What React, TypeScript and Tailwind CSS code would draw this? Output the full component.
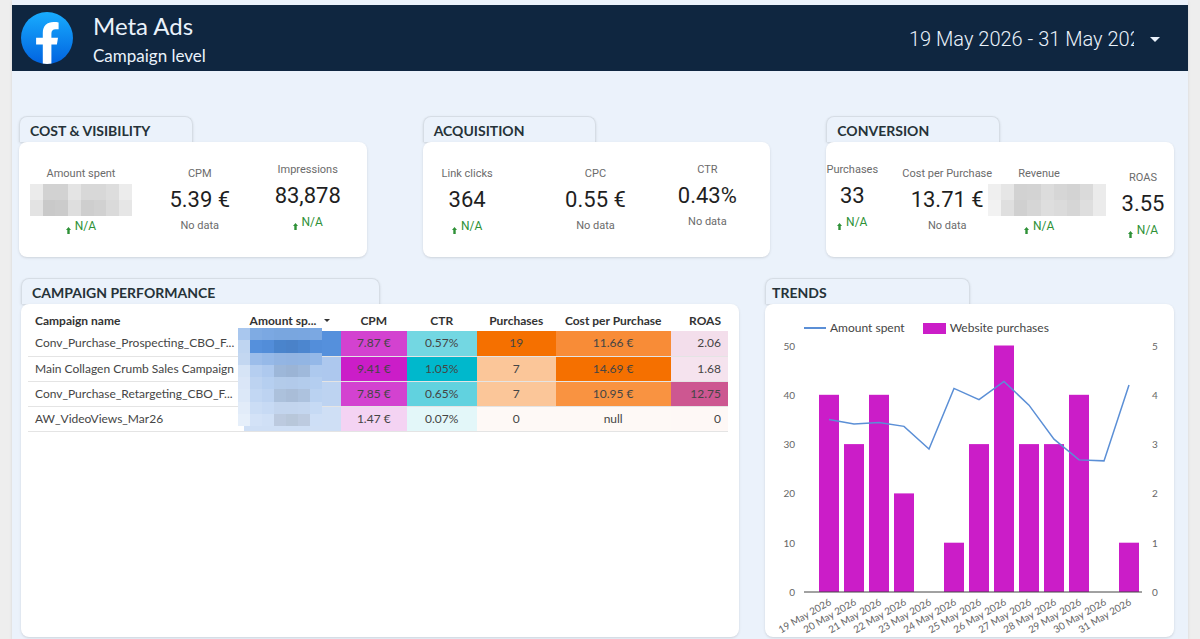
import React from "react";

interface Metric {
  label: string;
  value?: string;
  change?: string;
  mosaic?: string[];
  mosaicWidth?: string;
  className: string;
}

interface Campaign {
  name: string;
  amountBg: string;
  cells: { text: string; bg: string }[];
}

const SPENT_MOSAIC = [
  "#ebebeb", "#d2d2d2", "#d2d2d2", "#e4e4e4", "#d8d8d8", "#d8d8d8", "#dddddd", "#ececec",
  "#e3e3e3", "#c9c9c9", "#cbcbcb", "#dedede", "#cecece", "#d1d1d1", "#dadada", "#e6e6e6",
];

const REVENUE_MOSAIC = [
  "#efefef", "#e6e6e6", "#d2d2d2", "#d3d3d3", "#dcdcdc", "#d6d6d6", "#d3d3d3", "#dadada", "#ebebeb",
  "#f2f2f2", "#dfdfdf", "#d0d0d0", "#d6d6d6", "#dedede", "#dbdbdb", "#d6d6d6", "#dedede", "#ebebeb",
];

const COLUMN_MOSAIC = [
  "#a9c7ee", "#7fabe3", "#7ba8e2", "#79a6df", "#79a6df", "#79a6e0", "#7ba8e2",
  "#bfd5f1", "#5590dc", "#528dd9", "#4a84cc", "#4a82c9", "#4c86cf", "#538eda",
  "#c3d7f1", "#9cbdea", "#96b9e8", "#93b5e3", "#92b4e2", "#92b5e3", "#94b8e8",
  "#d6e4f6", "#b5cef0", "#aec9ee", "#9db7d9", "#9bb4d5", "#9fb9db", "#adc9ee",
  "#dae6f7", "#bdd3f1", "#b6cff0", "#b3cbea", "#b2caea", "#b3ccec", "#b4cef0",
  "#dce8f8", "#c2d7f3", "#bdd3f1", "#acc1dc", "#a9bdd8", "#adc2de", "#bad2f1",
  "#e2ecf9", "#cbddf5", "#c7daf4", "#c3d5ee", "#c3d5ee", "#c4d6ef", "#c6daf4",
  "#e6effa", "#d3e2f7", "#d0e0f6", "#bccadf", "#b8c7da", "#bdcbe0", "#cedff6",
];

const costMetrics: Metric[] = [
  { label: "Amount spent", mosaic: SPENT_MOSAIC, mosaicWidth: "w-[102px] grid-cols-8", change: "N/A", className: "pt-6" },
  { label: "CPM", value: "5.39 €", className: "pt-6" },
  { label: "Impressions", value: "83,878", change: "N/A", className: "pt-5" },
];

const acquisitionMetrics: Metric[] = [
  { label: "Link clicks", value: "364", change: "N/A", className: "pt-6" },
  { label: "CPC", value: "0.55 €", className: "pt-6" },
  { label: "CTR", value: "0.43%", className: "pt-5" },
];

const conversionMetrics: Metric[] = [
  { label: "Purchases", value: "33", change: "N/A", className: "pt-5 pr-7" },
  { label: "Cost per Purchase", value: "13.71 €", className: "pt-6" },
  { label: "Revenue", mosaic: REVENUE_MOSAIC, mosaicWidth: "w-[118px] grid-cols-9 self-start", change: "N/A", className: "pt-6 pr-4" },
  { label: "ROAS", value: "3.55", change: "N/A", className: "pt-7 pl-1.5" },
];

const campaigns: Campaign[] = [
  {
    name: "Conv_Purchase_Prospecting_CBO_F...",
    amountBg: "bg-[#5590dc]",
    cells: [
      { text: "7.87 €", bg: "bg-[#d342d0]" },
      { text: "0.57%", bg: "bg-[#73d7e2]" },
      { text: "19", bg: "bg-[#f57000]" },
      { text: "11.66 €", bg: "bg-[#f88c37]" },
      { text: "2.06", bg: "bg-[#f3deeb]" },
    ],
  },
  {
    name: "Main Collagen Crumb Sales Campaign",
    amountBg: "bg-[#adc8ee]",
    cells: [
      { text: "9.41 €", bg: "bg-[#cb1dc8]" },
      { text: "1.05%", bg: "bg-[#00b8cc]" },
      { text: "7", bg: "bg-[#fbc699]" },
      { text: "14.69 €", bg: "bg-[#f57000]" },
      { text: "1.68", bg: "bg-[#f5e3ee]" },
    ],
  },
  {
    name: "Conv_Purchase_Retargeting_CBO_F...",
    amountBg: "bg-[#bdd3f1]",
    cells: [
      { text: "7.85 €", bg: "bg-[#d342d0]" },
      { text: "0.65%", bg: "bg-[#61d2df]" },
      { text: "7", bg: "bg-[#fbc699]" },
      { text: "10.95 €", bg: "bg-[#f99341]" },
      { text: "12.75", bg: "bg-[#cd5791]" },
    ],
  },
  {
    name: "AW_VideoViews_Mar26",
    amountBg: "bg-[#cfdff5]",
    cells: [
      { text: "1.47 €", bg: "bg-[#f4d3f3]" },
      { text: "0.07%", bg: "bg-[#e3f7f9]" },
      { text: "0", bg: "bg-[#fef9f6]" },
      { text: "null", bg: "bg-[#fef9f6]" },
      { text: "0", bg: "bg-[#fef8f6]" },
    ],
  },
];

const trend = [
  { day: 19, spent: 35, purchases: 4 },
  { day: 20, spent: 34.1, purchases: 3 },
  { day: 21, spent: 34.4, purchases: 4 },
  { day: 22, spent: 33.6, purchases: 2 },
  { day: 23, spent: 29, purchases: 0 },
  { day: 24, spent: 41.3, purchases: 1 },
  { day: 25, spent: 39, purchases: 3 },
  { day: 26, spent: 42.7, purchases: 5 },
  { day: 27, spent: 37.9, purchases: 3 },
  { day: 28, spent: 31, purchases: 3 },
  { day: 29, spent: 26.8, purchases: 4 },
  { day: 30, spent: 26.6, purchases: 0 },
  { day: 31, spent: 42, purchases: 1 },
];

const FacebookLogo: React.FC = () => (
  <svg viewBox="0 0 52 52" className="size-[52px] shrink-0" role="img" aria-label="Facebook">
    <defs>
      <linearGradient id="fb" x1="0" y1="0" x2="0" y2="1">
        <stop offset="0" stopColor="#18acfe" />
        <stop offset="1" stopColor="#0163e0" />
      </linearGradient>
    </defs>
    <circle cx="26" cy="26" r="26" fill="url(#fb)" />
    <path
      d="M30.4 51.6V32.6h5.5l1.1-6.9h-6.6v-4c0-2.6 1.2-4.4 4.3-4.4h2.9v-6.9c-1.2-.2-3.2-.4-4.9-.4-6.6 0-10.9 3.9-10.9 10.8v4.9h-6.7v6.9h6.7v19a26 26 0 0 0 8.6 0z"
      fill="#fff"
    />
  </svg>
);

const Tab: React.FC<{ title: string; padding?: string }> = ({ title, padding = "pl-2.5" }) => (
  <h2
    className={`h-[26px] w-1/2 rounded-t-lg border border-b-0 border-[#d6dde5] pt-1 text-[14px] leading-5 font-bold text-[#263238] shadow-sm ${padding}`}
  >
    {title}
  </h2>
);

const MetricTile: React.FC<{ metric: Metric }> = ({ metric }) => (
  <div
    className={`flex min-w-0 flex-col items-center font-[Roboto,sans-serif] text-[12px] leading-4 whitespace-nowrap text-[#6b6b6b] ${metric.className}`}
  >
    <span className="text-[11px]">{metric.label}</span>
    {metric.mosaic ? (
      <div className={`my-0.5 grid h-8 shrink-0 ${metric.mosaicWidth}`}>
        {metric.mosaic.map((color, i) => (
          <span key={i} style={{ backgroundColor: color }} />
        ))}
      </div>
    ) : (
      <span className="text-[22px] leading-9 text-[#1f1f1f]">{metric.value}</span>
    )}
    {metric.change ? (
      <span className="flex items-end gap-1 text-[#2e9137]">
        <svg viewBox="0 0 5 7" className="h-[7px] w-[5px]" aria-hidden="true">
          <path d="M2.5 0 5 3H3.7v4H1.3V3H0z" fill="currentColor" />
        </svg>
        {metric.change}
      </span>
    ) : (
      <span className="text-[11px]">No data</span>
    )}
  </div>
);

const KpiCard: React.FC<{ title: string; metrics: Metric[]; columns: string }> = ({ title, metrics, columns }) => (
  <section>
    <Tab title={title} />
    <div className={`grid min-h-[115px] rounded-lg bg-white shadow ${columns}`}>
      {metrics.map((m) => (
        <MetricTile key={m.label} metric={m} />
      ))}
    </div>
  </section>
);

const CampaignTable: React.FC = () => (
  <div className="relative">
    <table className="w-full table-fixed border-collapse text-center text-[12px] text-[#454545]">
      <colgroup>
        <col className="w-[30.8%]" />
        <col className="w-[13.9%]" />
        <col className="w-[9.4%]" />
        <col className="w-[10%]" />
        <col className="w-[11.3%]" />
        <col className="w-[16.4%]" />
        <col className="w-[8.2%]" />
      </colgroup>
      <thead>
        <tr className="h-[27px] whitespace-nowrap text-[#333]">
          <th className="pt-1.5 pl-[7px] text-left font-bold">Campaign name</th>
          <th className="pt-1.5 pl-1.5 text-left font-bold" aria-sort="descending">
            <button className="flex items-center gap-2 font-bold">
              Amount sp...
              <span className="border-x-3 border-t-3 border-x-transparent border-t-[#333]" />
            </button>
          </th>
          <th className="pt-1.5 font-bold">CPM</th>
          <th className="pt-1.5 font-bold">CTR</th>
          <th className="pt-1.5 font-bold">Purchases</th>
          <th className="pt-1.5 font-bold">Cost per Purchase</th>
          <th className="pt-1.5 pr-[7px] text-right font-bold">ROAS</th>
        </tr>
      </thead>
      <tbody>
        {campaigns.map((c) => (
          <tr key={c.name} className="h-[25px] border-b border-[#e4e4e4]">
            <td className="pl-[7px] text-left whitespace-nowrap">{c.name}</td>
            <td className={c.amountBg} />
            {c.cells.map((cell, i) => (
              <td key={i} className={`${cell.bg} last:pr-[7px] last:text-right`}>
                {cell.text}
              </td>
            ))}
          </tr>
        ))}
      </tbody>
    </table>
    {/* hides the spend figures */}
    <div className="absolute top-6 left-[30%] grid h-[98px] w-[12%] grid-cols-7">
      {COLUMN_MOSAIC.map((color, i) => (
        <span key={i} style={{ backgroundColor: color }} />
      ))}
    </div>
  </div>
);

const TrendChart: React.FC = () => {
  const base = 254;
  const x = (i: number) => 64 + i * 25;
  const points = trend.map((t, i) => `${x(i)},${base - t.spent * 4.93}`).join(" ");

  return (
    <svg viewBox="0 0 409 299" className="block w-full" role="img" aria-label="Amount spent and website purchases per day">
      <g fontSize="10" fill="#666">
        {[0, 1, 2, 3, 4, 5].map((n) => (
          <React.Fragment key={n}>
            <text x="30" y={base - n * 49.3 + 4} textAnchor="end">
              {n * 10}
            </text>
            <text x="387" y={base - n * 49.3 + 4}>
              {n}
            </text>
          </React.Fragment>
        ))}
      </g>
      {trend.map((t, i) => (
        <rect key={t.day} x={x(i) - 10} y={base - t.purchases * 49.3} width="20" height={t.purchases * 49.3} fill="#cb1dc8" />
      ))}
      <line x1="39" y1={base} x2="377" y2={base} stroke="#444" />
      <polyline points={points} fill="none" stroke="#5b8fd6" strokeWidth="1.5" />
      <g fontSize="10" fill="#666">
        {trend.map((t, i) => (
          <text key={t.day} textAnchor="end" transform={`translate(${x(i) + 3} ${base + 12}) rotate(-30)`}>
            {t.day} May 2026
          </text>
        ))}
      </g>
    </svg>
  );
};

const App: React.FC = () => {
  return (
    <div className="min-h-screen bg-[#eeeeee] px-3 font-[Lato,sans-serif]">
      <div className="min-h-screen bg-[#ebf2fb] pt-[5px] shadow">
        <header className="flex items-center bg-[#0f2640] py-[3px] pr-7 pl-[9px] text-[#eaf2fb]">
          <FacebookLogo />
          <div className="ml-5 pt-1">
            <h1 className="text-[24px] leading-7">Meta Ads</h1>
            <p className="pt-1 text-[17px] leading-6">Campaign level</p>
          </div>
          <button className="ml-auto flex items-center gap-4 pt-0.5 font-[Roboto,sans-serif] text-[20px] font-light">
            <span className="w-[225px] overflow-hidden text-left whitespace-nowrap">19 May 2026 - 31 May 2026</span>
            <span className="border-x-5 border-t-5 border-x-transparent border-t-[#eaf2fb]" />
          </button>
        </header>

        <main className="pt-[45px] pr-3.5 pb-0.5 pl-[7px]">
          {/* KPI cards */}
          <div className="grid grid-cols-3 gap-14">
            <KpiCard title="COST & VISIBILITY" metrics={costMetrics} columns="grid-cols-[124fr_114fr_102fr] pr-2" />
            <KpiCard title="ACQUISITION" metrics={acquisitionMetrics} columns="grid-cols-[89fr_168fr_56fr] pr-[35px]" />
            <KpiCard title="CONVERSION" metrics={conversionMetrics} columns="grid-cols-[80fr_82fr_118fr_68fr]" />
          </div>

          <div className="grid grid-cols-[718fr_409fr] gap-[26px] pt-[21px] pl-0.5">
            <section className="flex flex-col">
              <Tab title="CAMPAIGN PERFORMANCE" />
              <div className="flex-1 rounded-lg bg-white pr-[11px] pl-[7px] shadow">
                <CampaignTable />
              </div>
            </section>

            <section className="flex flex-col">
              <Tab title="TRENDS" padding="pl-1.5" />
              <div className="flex-1 rounded-lg bg-white pt-3.5 shadow">
                <div className="flex items-center gap-[18px] pl-[39px] text-[12px] leading-5 text-[#444]">
                  <span className="flex items-center gap-1">
                    <span className="h-0.5 w-[22px] bg-[#5b8fd6]" />
                    Amount spent
                  </span>
                  <span className="flex items-center gap-1">
                    <span className="h-[11px] w-[23px] bg-[#cb1dc8]" />
                    Website purchases
                  </span>
                </div>
                <TrendChart />
              </div>
            </section>
          </div>
        </main>
      </div>
    </div>
  );
};

export default App;
